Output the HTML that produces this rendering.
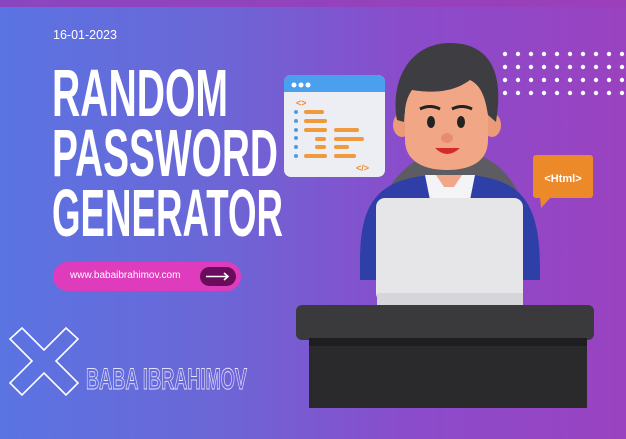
<!DOCTYPE html>
<html><head><style>
html,body{margin:0;padding:0}
body{width:626px;height:439px;overflow:hidden;position:relative;background:linear-gradient(90deg,#5a74e2 0%,#6c66d6 35%,#8a4ccb 65%,#9a42c0 100%);font-family:"Liberation Sans",sans-serif}
.top{position:absolute;left:0;top:0;width:626px;height:7px;background:linear-gradient(90deg,#8a46c0,#9c3fba)}
.date{position:absolute;left:53px;top:28px;color:#fff;font-size:12.5px}
.pill{position:absolute;left:53px;top:262px;width:188px;height:29px;border-radius:15px;background:#de3cbd}
.pill span{position:absolute;left:17px;top:8px;color:#fff;font-size:10px}
.arr{position:absolute;left:147px;top:5px;width:36px;height:19px;border-radius:10px;background:#6a0c5c}
</style></head><body>
<div class="top"></div>
<div class="date">16-01-2023</div>
<svg width="626" height="439" style="position:absolute;left:0;top:0">
<g font-family="Liberation Sans,sans-serif" font-weight="bold" fill="#fff" font-size="67">
<text x="52" y="116" textLength="176" lengthAdjust="spacingAndGlyphs">RANDOM</text>
<text x="52" y="176" textLength="226" lengthAdjust="spacingAndGlyphs">PASSWORD</text>
<text x="52" y="236" textLength="231" lengthAdjust="spacingAndGlyphs">GENERATOR</text>
</g>
<path d="M10 349 L22 338 L44 360 L66 338 L78 349 L56 371 L78 393 L66 405 L44 383 L22 405 L10 393 L32 371 Z" fill="none" stroke="#fff" stroke-width="1.6" transform="translate(0,-10)"/>
<text x="86" y="389" font-size="30" font-weight="bold" fill="none" stroke="#e8e4ff" stroke-width="0.9" textLength="161" lengthAdjust="spacingAndGlyphs">BABA IBRAHIMOV</text>
<!-- dots -->
<g fill="#fff">
<g id="r"><circle cx="505" cy="54" r="2.2"/><circle cx="518" cy="54" r="2.2"/><circle cx="531" cy="54" r="2.2"/><circle cx="544" cy="54" r="2.2"/><circle cx="557" cy="54" r="2.2"/><circle cx="570" cy="54" r="2.2"/><circle cx="583" cy="54" r="2.2"/><circle cx="596" cy="54" r="2.2"/><circle cx="609" cy="54" r="2.2"/><circle cx="622" cy="54" r="2.2"/></g>
<use href="#r" y="13"/><use href="#r" y="26"/><use href="#r" y="39"/>
</g>
<!-- code window -->
<rect x="284" y="75" width="101" height="102" rx="7" fill="#eceef3"/>
<path d="M284 82 a7 7 0 0 1 7 -7 h87 a7 7 0 0 1 7 7 v10 h-101z" fill="#4aa0ec"/>
<g fill="#fff"><circle cx="294" cy="85" r="2.5"/><circle cx="301" cy="85" r="2.5"/><circle cx="308" cy="85" r="2.5"/></g>
<g fill="#4a9ee8"><circle cx="296" cy="112" r="2"/><circle cx="296" cy="121" r="2"/><circle cx="296" cy="130" r="2"/><circle cx="296" cy="138" r="2"/><circle cx="296" cy="147" r="2"/><circle cx="296" cy="156" r="2"/></g>
<g stroke="#ef9a3c" stroke-width="4" stroke-linecap="round">
<path d="M306 112h16M306 121h19M306 130h19M336 130h21M317 139h7M336 139h26M317 147h7M336 147h11M306 156h19M336 156h18"/>
</g>
<text x="296" y="106" font-size="9" font-weight="bold" fill="#ef8a2c">&lt;&gt;</text>
<text x="356" y="171" font-size="9" font-weight="bold" fill="#ef8a2c">&lt;/&gt;</text>
<!-- html bubble -->
<rect x="533" y="155" width="60" height="43" rx="3" fill="#ec8a2a"/>
<path d="M540 196 L541 208 L552 196Z" fill="#ec8a2a"/>
<text x="563" y="182" font-size="11" font-weight="bold" fill="#fff" text-anchor="middle">&lt;Html&gt;</text>
<!-- chair -->
<path d="M372 260 C370 180 420 150 450 150 C500 150 535 190 530 270Z" fill="#5c5c62"/>
<!-- body -->
<path d="M360 260 C360 200 380 180 430 175 L470 175 C520 180 540 200 540 270 L540 280 L360 280Z" fill="#2f3fa8"/>
<path d="M425 175 L475 175 L470 200 L430 200Z" fill="#f4f4f6"/>
<path d="M436 175 h26 l-8 12 h-10z" fill="#f0a688"/>
<!-- head -->
<ellipse cx="402" cy="125" rx="9" ry="12" fill="#eb9a7a"/>
<ellipse cx="492" cy="125" rx="9" ry="12" fill="#eb9a7a"/>
<path d="M405 100 C405 80 420 75 447 75 C475 75 488 82 488 105 L488 140 C488 162 470 170 447 170 C422 170 405 160 405 140Z" fill="#f1a786"/>
<path d="M397 120 C390 80 410 43 450 43 C488 43 505 70 496 122 L488 115 C485 95 480 85 470 80 C450 95 425 92 412 90 C405 100 405 110 404 122Z" fill="#3e3e42"/>
<ellipse cx="431" cy="122" rx="4" ry="6" fill="#222"/>
<ellipse cx="461" cy="122" rx="4" ry="6" fill="#222"/>
<path d="M420 109 q10 -5 20 0 M452 109 q10 -5 20 0" stroke="#222" stroke-width="3" fill="none"/>
<ellipse cx="447" cy="138" rx="6" ry="5" fill="#e88c70"/>
<path d="M435 148 q12 12 25 0z" fill="#d42a2a"/>
<!-- laptop -->
<rect x="376" y="198" width="147" height="104" rx="9" fill="#e6e6e8"/>
<rect x="377" y="293" width="146" height="19" rx="2" fill="#d6d6da"/>
<!-- desk -->
<rect x="296" y="305" width="298" height="35" rx="6" fill="#3a3a3c"/>
<rect x="309" y="338" width="278" height="70" fill="#2a2a2c"/>
<rect x="309" y="338" width="278" height="8" fill="#1e1e20"/>
</svg>
<div class="pill"><span>www.babaibrahimov.com</span><div class="arr"><svg width="36" height="19"><path d="M6 9.5h22M24 6l4 3.5-4 3.5" stroke="#fff" stroke-width="1.6" fill="none"/></svg></div></div>
</body></html>
